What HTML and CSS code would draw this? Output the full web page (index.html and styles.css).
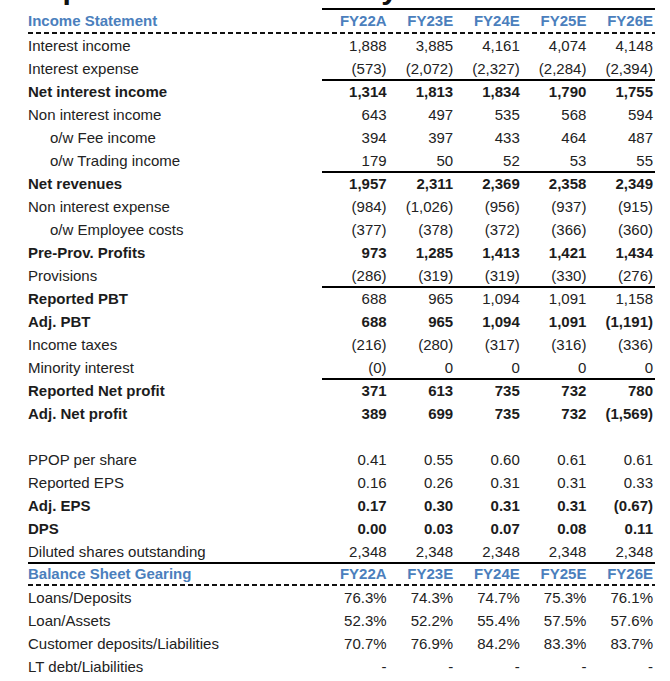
FILE: index.html
```html
<!DOCTYPE html>
<html lang="en">
<head>
<meta charset="utf-8">
<title>Income Statement</title>
<link rel="stylesheet" href="styles.css">
</head>
<body>
<div class="page">
  <div class="title"><div class="title-inner"><span>Top</span><span>summary</span></div></div>

  <div class="row head top">
    <div class="lbl">Income Statement</div>
    <div class="num">FY22A</div><div class="num">FY23E</div><div class="num">FY24E</div><div class="num">FY25E</div><div class="num">FY26E</div>
  </div>

  <div class="row"><div class="lbl">Interest income</div><div class="num">1,888</div><div class="num">3,885</div><div class="num">4,161</div><div class="num">4,074</div><div class="num">4,148</div></div>
  <div class="row"><div class="lbl">Interest expense</div><div class="num">(573)</div><div class="num">(2,072)</div><div class="num">(2,327)</div><div class="num">(2,284)</div><div class="num">(2,394)</div></div>
  <div class="row rule b"><div class="lbl">Net interest income</div><div class="num">1,314</div><div class="num">1,813</div><div class="num">1,834</div><div class="num">1,790</div><div class="num">1,755</div></div>
  <div class="row"><div class="lbl">Non interest income</div><div class="num">643</div><div class="num">497</div><div class="num">535</div><div class="num">568</div><div class="num">594</div></div>
  <div class="row"><div class="lbl ind">o/w Fee income</div><div class="num">394</div><div class="num">397</div><div class="num">433</div><div class="num">464</div><div class="num">487</div></div>
  <div class="row"><div class="lbl ind">o/w Trading income</div><div class="num">179</div><div class="num">50</div><div class="num">52</div><div class="num">53</div><div class="num">55</div></div>
  <div class="row rule b"><div class="lbl">Net revenues</div><div class="num">1,957</div><div class="num">2,311</div><div class="num">2,369</div><div class="num">2,358</div><div class="num">2,349</div></div>
  <div class="row"><div class="lbl">Non interest expense</div><div class="num">(984)</div><div class="num">(1,026)</div><div class="num">(956)</div><div class="num">(937)</div><div class="num">(915)</div></div>
  <div class="row"><div class="lbl ind">o/w Employee costs</div><div class="num">(377)</div><div class="num">(378)</div><div class="num">(372)</div><div class="num">(366)</div><div class="num">(360)</div></div>
  <div class="row b"><div class="lbl">Pre-Prov. Profits</div><div class="num">973</div><div class="num">1,285</div><div class="num">1,413</div><div class="num">1,421</div><div class="num">1,434</div></div>
  <div class="row"><div class="lbl">Provisions</div><div class="num">(286)</div><div class="num">(319)</div><div class="num">(319)</div><div class="num">(330)</div><div class="num">(276)</div></div>
  <div class="row rule"><div class="lbl bl">Reported PBT</div><div class="num">688</div><div class="num">965</div><div class="num">1,094</div><div class="num">1,091</div><div class="num">1,158</div></div>
  <div class="row b"><div class="lbl">Adj. PBT</div><div class="num">688</div><div class="num">965</div><div class="num">1,094</div><div class="num">1,091</div><div class="num">(1,191)</div></div>
  <div class="row"><div class="lbl">Income taxes</div><div class="num">(216)</div><div class="num">(280)</div><div class="num">(317)</div><div class="num">(316)</div><div class="num">(336)</div></div>
  <div class="row"><div class="lbl">Minority interest</div><div class="num">(0)</div><div class="num">0</div><div class="num">0</div><div class="num">0</div><div class="num">0</div></div>
  <div class="row rule b"><div class="lbl">Reported Net profit</div><div class="num">371</div><div class="num">613</div><div class="num">735</div><div class="num">732</div><div class="num">780</div></div>
  <div class="row b"><div class="lbl">Adj. Net profit</div><div class="num">389</div><div class="num">699</div><div class="num">735</div><div class="num">732</div><div class="num">(1,569)</div></div>
  <div class="row"></div>
  <div class="row"><div class="lbl">PPOP per share</div><div class="num">0.41</div><div class="num">0.55</div><div class="num">0.60</div><div class="num">0.61</div><div class="num">0.61</div></div>
  <div class="row"><div class="lbl">Reported EPS</div><div class="num">0.16</div><div class="num">0.26</div><div class="num">0.31</div><div class="num">0.31</div><div class="num">0.33</div></div>
  <div class="row b"><div class="lbl">Adj. EPS</div><div class="num">0.17</div><div class="num">0.30</div><div class="num">0.31</div><div class="num">0.31</div><div class="num">(0.67)</div></div>
  <div class="row b"><div class="lbl">DPS</div><div class="num">0.00</div><div class="num">0.03</div><div class="num">0.07</div><div class="num">0.08</div><div class="num">0.11</div></div>
  <div class="row underline"><div class="lbl">Diluted shares outstanding</div><div class="num">2,348</div><div class="num">2,348</div><div class="num">2,348</div><div class="num">2,348</div><div class="num">2,348</div></div>

  <div class="row head">
    <div class="lbl">Balance Sheet Gearing</div>
    <div class="num">FY22A</div><div class="num">FY23E</div><div class="num">FY24E</div><div class="num">FY25E</div><div class="num">FY26E</div>
  </div>
  <div class="row"><div class="lbl">Loans/Deposits</div><div class="num">76.3%</div><div class="num">74.3%</div><div class="num">74.7%</div><div class="num">75.3%</div><div class="num">76.1%</div></div>
  <div class="row"><div class="lbl">Loan/Assets</div><div class="num">52.3%</div><div class="num">52.2%</div><div class="num">55.4%</div><div class="num">57.5%</div><div class="num">57.6%</div></div>
  <div class="row"><div class="lbl">Customer deposits/Liabilities</div><div class="num">70.7%</div><div class="num">76.9%</div><div class="num">84.2%</div><div class="num">83.3%</div><div class="num">83.7%</div></div>
  <div class="row"><div class="lbl">LT debt/Liabilities</div><div class="num">-</div><div class="num">-</div><div class="num">-</div><div class="num">-</div><div class="num">-</div></div>
</div>
</body>
</html>
```

FILE: styles.css
```css
html, body {
  margin: 0;
  padding: 0;
  background: #ffffff;
}

body {
  font-family: "Liberation Sans", Arial, sans-serif;
  font-size: 15px;
  color: #222222;
}

.page {
  width: 627px;
  padding-left: 28px;
}

.title {
  height: 8px;
  overflow: hidden;
}

.title-inner {
  display: flex;
  justify-content: space-between;
  width: 370px;
  margin-top: -26px;
  font-size: 30px;
  line-height: 30px;
  font-weight: bold;
  color: #111111;
}

.row {
  display: grid;
  grid-template-columns: 294px repeat(5, 1fr);
  height: 23px;
  line-height: 23px;
  white-space: nowrap;
}

.num {
  text-align: right;
  padding-right: 2px;
}

.ind {
  padding-left: 22px;
}

.b {
  font-weight: bold;
  color: #1c1c1c;
}

.bl {
  font-weight: bold;
  color: #1c1c1c;
}

.rule .num {
  box-shadow: 0 -1px 0 #000000, inset 0 1px 0 #000000;
}

.underline {
  box-shadow: 0 1px 0 #000000, inset 0 -1px 0 #000000;
}

.head {
  font-weight: bold;
  color: #4b7fbd;
  line-height: 21px;
  background-image: repeating-linear-gradient(90deg, #111111 0 5px, transparent 5px 8px);
  background-size: 100% 2px;
  background-position: left bottom;
  background-repeat: no-repeat;
}

.head.top {
  height: 26px;
  line-height: 22px;
  padding: 2px 0;
  box-sizing: border-box;
}

.head.top .num {
  box-shadow: 0 -2px 0 #000000;
}
```
